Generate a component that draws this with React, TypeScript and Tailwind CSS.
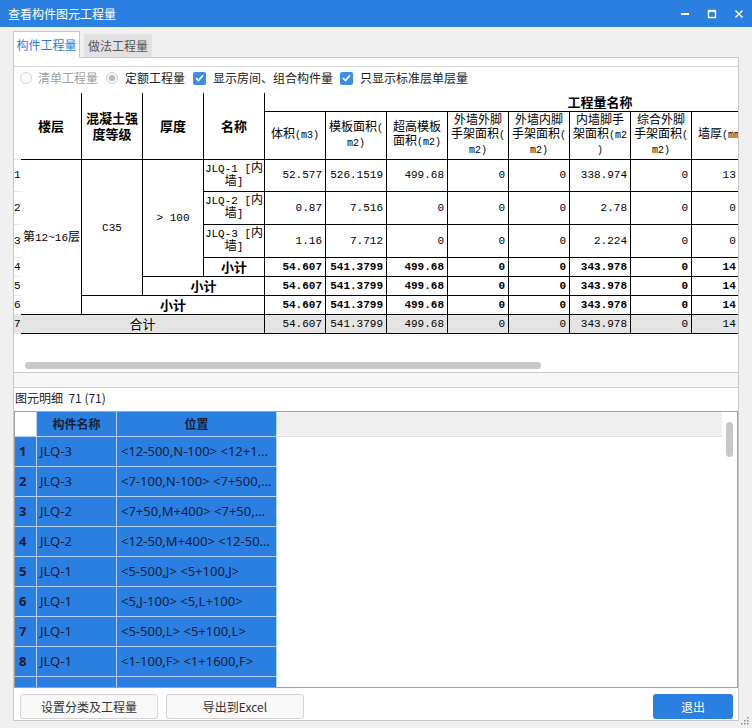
import React from 'react'

const cjk = "font-['Noto_Sans_CJK_SC',sans-serif]"
const mono = "font-['Liberation_Mono','Noto_Sans_CJK_SC',monospace]"
const ui = "font-['Noto_Sans','Noto_Sans_CJK_SC',sans-serif]"

// ascii runs get the narrow half-width look of the original grid font
const Mix = ({ text, small = 'text-[10px]' }: { text: string; small?: string }) => (
  <>
    {text
      .split(/([\x20-\x7e]+)/)
      .filter(Boolean)
      .map((p, i) =>
        /^[\x20-\x7e]+$/.test(p) ? (
          <span key={i} className={small}>
            {p}
          </span>
        ) : (
          <span key={i}>{p}</span>
        )
      )}
  </>
)

const Lines = ({ lines, small }: { lines: string[]; small?: string }) => (
  <>
    {lines.map((l, i) => (
      <div key={i} className="whitespace-nowrap">
        <Mix text={l} small={small} />
      </div>
    ))}
  </>
)

const qtyHeads = [
  ['体积(m3)'],
  ['模板面积(', 'm2)'],
  ['超高模板', '面积(m2)'],
  ['外墙外脚', '手架面积(', 'm2)'],
  ['外墙内脚', '手架面积(', 'm2)'],
  ['内墙脚手', '架面积(m2', ')'],
  ['综合外脚', '手架面积(', 'm2)'],
  ['墙厚(mm)'],
  ['墙高(m)'],
  ['墙长(m)'],
  ['超高体积(', 'm3)']
]

const r1 = ['52.577', '526.1519', '499.68', '0', '0', '338.974', '0', '13.2', '0', '0', '0']
const r2 = ['0.87', '7.516', '0', '0', '0', '2.78', '0', '0.6', '0', '0', '0']
const r3 = ['1.16', '7.712', '0', '0', '0', '2.224', '0', '0.6', '0', '0', '0']
const sum = ['54.607', '541.3799', '499.68', '0', '0', '343.978', '0', '14.4', '0', '0', '0']

const cell = 'border-r border-b border-black'
const rn = 'border-b border-[#e6e6e6] text-left text-[11px] overflow-hidden'
const num = 'border-r border-b border-black text-right pr-[3px] text-[11px]'

const details = [
  ['1', 'JLQ-3', '<12-500,N-100> <12+1600,N-100>'],
  ['2', 'JLQ-3', '<7-100,N-100> <7+500,N-100>'],
  ['3', 'JLQ-2', '<7+50,M+400> <7+50,N-100>'],
  ['4', 'JLQ-2', '<12-50,M+400> <12-50,N-100>'],
  ['5', 'JLQ-1', '<5-500,J> <5+100,J>'],
  ['6', 'JLQ-1', '<5,J-100> <5,L+100>'],
  ['7', 'JLQ-1', '<5-500,L> <5+100,L>'],
  ['8', 'JLQ-1', '<1-100,F> <1+1600,F>'],
  ['', '', '']
]

const Check = () => (
  <span className="w-[13px] h-[13px] rounded-[2px] bg-[#3b8de6] flex items-center justify-center">
    <svg width="9" height="8" viewBox="0 0 9 8">
      <path d="M1 4.2 L3.5 6.5 L8 1.2" fill="none" stroke="white" strokeWidth="1.6" />
    </svg>
  </span>
)

const QtyTable = () => (
  <table className={`${mono} w-[922px] table-fixed border-separate border-spacing-0 text-[12px] text-black`}>
    <colgroup>
      <col className="w-[7px]" />
      {Array.from({ length: 15 }).map((_, i) => (
        <col key={i} className="w-[61px]" />
      ))}
    </colgroup>
    <thead>
      <tr className="h-[19px]">
        <th rowSpan={2} className="border-b border-[#e6e6e6]" />
        <th rowSpan={2} className={`${cell} ${cjk} font-bold text-[13px] text-center`}>
          楼层
        </th>
        <th rowSpan={2} className={`${cell} ${cjk} font-bold text-[13px] text-center leading-[16px]`}>
          <div>混凝土强</div>
          <div>度等级</div>
        </th>
        <th rowSpan={2} className={`${cell} ${cjk} font-bold text-[13px] text-center`}>
          厚度
        </th>
        <th rowSpan={2} className={`${cell} ${cjk} font-bold text-[13px] text-center`}>
          名称
        </th>
        <th colSpan={11} className={`${cell} ${cjk} font-bold text-[13px] text-center leading-[18px]`}>
          工程量名称
        </th>
      </tr>
      <tr className="h-[48px]">
        {qtyHeads.map((h, i) => (
          <th key={i} className={`${cell} font-normal text-center leading-[14px]`}>
            <Lines lines={h} />
          </th>
        ))}
      </tr>
    </thead>
    <tbody>
      <tr className="h-[32px]">
        <td className={rn}>1</td>
        <td rowSpan={6} className={`${cell} ${cjk} text-left pl-[2px] whitespace-nowrap`}>
          第<span className={`${mono} text-[11px]`}>12~16</span>层
        </td>
        <td rowSpan={5} className={`${cell} text-center`}>
          <Mix text="C35" small="text-[11px]" />
        </td>
        <td rowSpan={4} className={`${cell} text-center`}>
          <Mix text="> 100" small="text-[11px]" />
        </td>
        <td className={`${cell} text-center leading-[13px]`}>
          <Lines lines={['JLQ-1 [内', '墙]']} small="text-[11px]" />
        </td>
        {r1.map((v, i) => (
          <td key={i} className={num}>
            {v}
          </td>
        ))}
      </tr>
      <tr className="h-[33px]">
        <td className={rn}>2</td>
        <td className={`${cell} text-center leading-[13px]`}>
          <Lines lines={['JLQ-2 [内', '墙]']} small="text-[11px]" />
        </td>
        {r2.map((v, i) => (
          <td key={i} className={num}>
            {v}
          </td>
        ))}
      </tr>
      <tr className="h-[33px]">
        <td className={rn}>3</td>
        <td className={`${cell} text-center leading-[13px]`}>
          <Lines lines={['JLQ-3 [内', '墙]']} small="text-[11px]" />
        </td>
        {r3.map((v, i) => (
          <td key={i} className={num}>
            {v}
          </td>
        ))}
      </tr>
      <tr className="h-[19px]">
        <td className={rn}>4</td>
        <td className={`${cell} ${cjk} font-bold text-[13px] text-center leading-[18px]`}>小计</td>
        {sum.map((v, i) => (
          <td key={i} className={`${num} font-bold`}>
            {v}
          </td>
        ))}
      </tr>
      <tr className="h-[19px]">
        <td className={rn}>5</td>
        <td colSpan={2} className={`${cell} ${cjk} font-bold text-[13px] text-center leading-[18px]`}>
          小计
        </td>
        {sum.map((v, i) => (
          <td key={i} className={`${num} font-bold`}>
            {v}
          </td>
        ))}
      </tr>
      <tr className="h-[19px]">
        <td className={rn}>6</td>
        <td colSpan={3} className={`${cell} ${cjk} font-bold text-[13px] text-center leading-[18px]`}>
          小计
        </td>
        {sum.map((v, i) => (
          <td key={i} className={`${num} font-bold`}>
            {v}
          </td>
        ))}
      </tr>
      <tr className="h-[19px] bg-[#e4e4e4]">
        <td className={rn}>7</td>
        <td colSpan={4} className={`${cell} ${cjk} text-[13px] text-center leading-[18px]`}>
          合计
        </td>
        {sum.map((v, i) => (
          <td key={i} className={num}>
            {v}
          </td>
        ))}
      </tr>
    </tbody>
  </table>
)

const DetailGrid = () => (
  <div className="h-[277px] shrink-0 border border-[#a0a0a0] flex overflow-hidden">
    <div className="flex-1 min-w-0 flex flex-col">
      <div className="flex h-[25px] shrink-0">
        <div className="w-[22px] bg-white border-r border-b border-[#b3d3f6]" />
        <div className={`w-[80px] bg-[#2b7fe0] border-r border-b border-[#b3d3f6] flex items-center justify-center ${cjk} font-bold text-[12px] text-[#14213d]`}>
          构件名称
        </div>
        <div className={`w-[160px] bg-[#2b7fe0] border-r border-b border-[#b3d3f6] flex items-center justify-center ${cjk} font-bold text-[12px] text-[#14213d]`}>
          位置
        </div>
        <div className="flex-1 bg-[#f0f0f0] border-b border-[#e0e0e0]" />
      </div>
      {details.map(([n, name, pos], i) => (
        <div key={i} className={`flex h-[30px] shrink-0 ${ui} text-[13px] text-[#14213d]`}>
          <div className="w-[22px] bg-[#2b7fe0] border-r border-b border-[#b3d3f6] flex items-center pl-[4px] font-bold">
            {n}
          </div>
          <div className="w-[80px] bg-[#2b7fe0] border-r border-b border-[#b3d3f6] flex items-center pl-[3px]">
            {name}
          </div>
          <div className="w-[160px] bg-[#2b7fe0] border-r border-b border-[#b3d3f6] flex items-center pl-[4px] pr-[3px]">
            <span className="whitespace-nowrap overflow-hidden text-ellipsis">{pos}</span>
          </div>
        </div>
      ))}
    </div>
    <div className="w-[15px] shrink-0 bg-white pt-[10px] pl-[4px]">
      <div className="w-[7px] h-[35px] rounded-full bg-[#c8c8c8]" />
    </div>
  </div>
)

export default function App() {
  return (
    <div className={`relative w-[752px] h-[728px] bg-[#f0f0f0] flex flex-col overflow-hidden ${cjk}`}>
      {/* title bar */}
      <div className="h-[27px] shrink-0 bg-[#2b7fe0] flex items-center justify-between">
        <span className="pl-[8px] text-[12px] text-white">查看构件图元工程量</span>
        <div className="flex h-full">
          <div className="w-[27px] flex items-center justify-center">
            <svg width="10" height="10" viewBox="0 0 10 10">
              <rect x="1" y="4" width="8" height="2" fill="white" />
            </svg>
          </div>
          <div className="w-[27px] flex items-center justify-center">
            <svg width="10" height="10" viewBox="0 0 10 10">
              <rect x="1.5" y="1.5" width="7" height="7" fill="none" stroke="white" strokeWidth="1.4" />
              <rect x="1" y="1" width="8" height="2" fill="white" />
            </svg>
          </div>
          <div className="w-[27px] flex items-center justify-center">
            <svg width="10" height="10" viewBox="0 0 10 10">
              <path d="M1.5 1.5 L8.5 8.5 M8.5 1.5 L1.5 8.5" stroke="white" strokeWidth="1.5" />
            </svg>
          </div>
        </div>
      </div>

      <div className="flex-1 min-h-0 flex flex-col px-[13px] pt-[4px] pb-[7px]">
        {/* tabs */}
        <div className="h-[26px] shrink-0 flex items-end">
          <div className="relative z-10 h-[27px] -mb-px w-[67px] bg-white border border-b-0 border-[#c8c8c8] flex items-center justify-center text-[12px] text-[#2b7de1]">
            构件工程量
          </div>
          <div className="ml-[4px] h-[23px] w-[68px] bg-[#e1e1e1] flex items-center justify-center text-[12px] text-[#555]">
            做法工程量
          </div>
        </div>

        {/* tab panel */}
        <div className="flex-1 w-[726px] min-h-0 bg-white border border-[#c8c8c8] flex flex-col overflow-hidden">
          <div className="h-[8px] shrink-0" />
          <div className="w-full shrink-0 border-t border-[#d5d5d5] overflow-hidden">
            <div className="h-[22px] flex items-center text-[12px]">
              <span className="ml-[6px] w-[12px] h-[12px] rounded-full border border-[#d6d6d6] bg-[#fafafa]" />
              <span className="ml-[6px] text-[#a0a0a0]">清单工程量</span>
              <span className="ml-[8px] w-[12px] h-[12px] rounded-full border border-[#cfcfcf] bg-[#f6f6f6] flex items-center justify-center">
                <span className="w-[6px] h-[6px] rounded-full bg-[#b8b8b8]" />
              </span>
              <span className="ml-[7px] text-[#222]">定额工程量</span>
              <span className="ml-[8px]">
                <Check />
              </span>
              <span className="ml-[7px] text-[#222]">显示房间、组合构件量</span>
              <span className="ml-[7px]">
                <Check />
              </span>
              <span className="ml-[7px] text-[#222]">只显示标准层单层量</span>
            </div>
            <div className="h-[4px]" />
            <div className="w-[724px] h-[269px] overflow-hidden">
              <QtyTable />
            </div>
            <div className="h-[7px] ml-[11px] w-[516px] rounded-full bg-[#c8c8c8]" />
            <div className="h-[3px]" />
          </div>

          {/* splitter */}
          <div className="h-[16px] shrink-0 border-y border-t-[#c8c8c8] border-b-[#d0d0d0] bg-[#f6f6f6]" />

          <div className="h-[23px] shrink-0 flex items-center pb-[4px] pl-[1px] text-[12px] text-[#222]">
            图元明细&nbsp;&nbsp;71 (71)
          </div>

          <DetailGrid />

          <div className="flex-1 flex items-start justify-between pt-[6px] pl-[6px] pr-[5px]">
            <div className="flex gap-[8px]">
              <button className="w-[138px] h-[25px] bg-[#f8f8f8] border border-[#d4d4d4] rounded-[3px] text-[12px] text-[#333]">
                设置分类及工程量
              </button>
              <button className="w-[138px] h-[25px] bg-[#f8f8f8] border border-[#d4d4d4] rounded-[3px] text-[12px] text-[#333]">
                导出到Excel
              </button>
            </div>
            <button className="w-[80px] h-[25px] bg-[#2b7fe0] rounded-[3px] text-[12px] text-white">退出</button>
          </div>
        </div>
      </div>

      {/* resize grip */}
      <svg className="absolute right-[3px] bottom-[3px]" width="8" height="8" viewBox="0 0 8 8">
        <rect x="6" y="0" width="1.5" height="1.5" fill="#8a8a8a" />
        <rect x="3" y="3" width="1.5" height="1.5" fill="#8a8a8a" />
        <rect x="6" y="3" width="1.5" height="1.5" fill="#8a8a8a" />
        <rect x="0" y="6" width="1.5" height="1.5" fill="#8a8a8a" />
        <rect x="3" y="6" width="1.5" height="1.5" fill="#8a8a8a" />
        <rect x="6" y="6" width="1.5" height="1.5" fill="#8a8a8a" />
      </svg>
    </div>
  )
}
